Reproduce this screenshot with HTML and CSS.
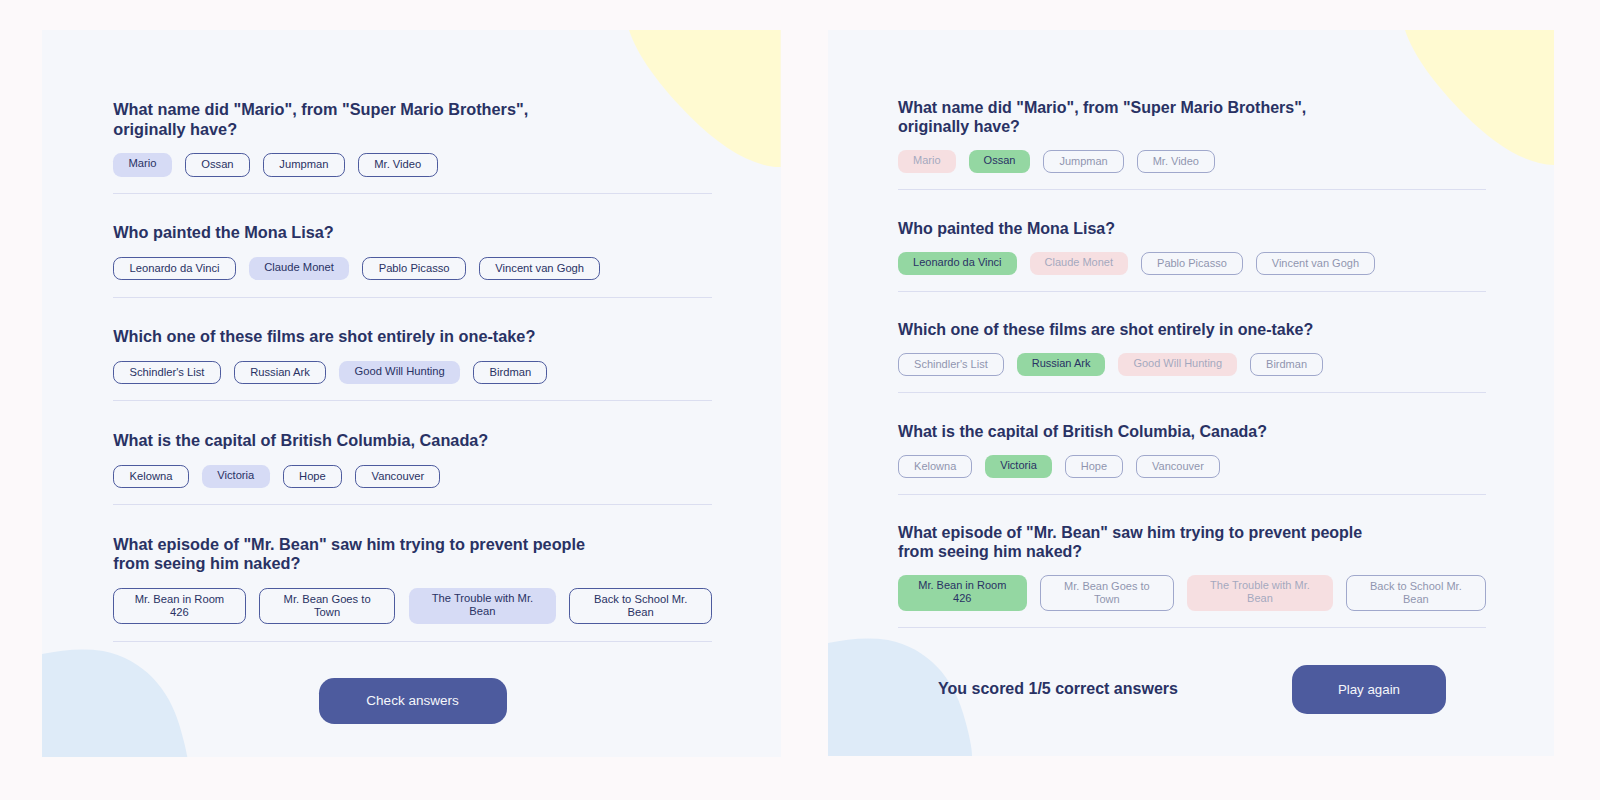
FILE: index.html
```html
<!DOCTYPE html>
<html lang="en">
<head>
<meta charset="utf-8">
<title>Quizzical</title>
<link rel="stylesheet" href="styles.css">
</head>
<body>
<main class="page">
  <section class="panel panel--original">
    <svg class="blob blob--yellow" width="149" height="135" viewBox="0 0 149 135"><path d="M0 0 C8 25 30 55 60 85 C90 115 120 134 149 135 V0 Z"/></svg>
    <svg class="blob blob--blue" width="145" height="118" viewBox="0 0 145 118"><path d="M0 5 C20 1 40 -1 60 2 C100 10 125 40 135 75 C141 95 144 110 144 118 H0 Z"/></svg>
    <div class="quiz">
      <div class="question">
        <h2 class="question-title">What name did "Mario", from "Super Mario Brothers", originally have?</h2>
        <div class="answers">
          <button class="answer answer--selected">Mario</button>
          <button class="answer">Ossan</button>
          <button class="answer">Jumpman</button>
          <button class="answer">Mr. Video</button>
        </div>
      </div>
      <div class="question">
        <h2 class="question-title">Who painted the Mona Lisa?</h2>
        <div class="answers">
          <button class="answer">Leonardo da Vinci</button>
          <button class="answer answer--selected">Claude Monet</button>
          <button class="answer">Pablo Picasso</button>
          <button class="answer">Vincent van Gogh</button>
        </div>
      </div>
      <div class="question">
        <h2 class="question-title">Which one of these films are shot entirely in one-take?</h2>
        <div class="answers">
          <button class="answer">Schindler's List</button>
          <button class="answer">Russian Ark</button>
          <button class="answer answer--selected">Good Will Hunting</button>
          <button class="answer">Birdman</button>
        </div>
      </div>
      <div class="question">
        <h2 class="question-title">What is the capital of British Columbia, Canada?</h2>
        <div class="answers">
          <button class="answer">Kelowna</button>
          <button class="answer answer--selected">Victoria</button>
          <button class="answer">Hope</button>
          <button class="answer">Vancouver</button>
        </div>
      </div>
      <div class="question">
        <h2 class="question-title">What episode of "Mr. Bean" saw him trying to prevent people from seeing him naked?</h2>
        <div class="answers">
          <button class="answer">Mr. Bean in Room 426</button>
          <button class="answer">Mr. Bean Goes to Town</button>
          <button class="answer answer--selected">The Trouble with Mr. Bean</button>
          <button class="answer">Back to School Mr. Bean</button>
        </div>
      </div>
      <div class="footer footer--check">
        <button class="btn btn--check">Check answers</button>
      </div>
    </div>
  </section>

  <section class="panel panel--live">
    <svg class="blob blob--yellow" width="149" height="135" viewBox="0 0 149 135"><path d="M0 0 C8 25 30 55 60 85 C90 115 120 134 149 135 V0 Z"/></svg>
    <svg class="blob blob--blue" width="145" height="118" viewBox="0 0 145 118"><path d="M0 5 C20 1 40 -1 60 2 C100 10 125 40 135 75 C141 95 144 110 144 118 H0 Z"/></svg>
    <div class="quiz">
      <div class="question">
        <h2 class="question-title">What name did "Mario", from "Super Mario Brothers", originally have?</h2>
        <div class="answers">
          <button class="answer answer--wrong">Mario</button>
          <button class="answer answer--correct">Ossan</button>
          <button class="answer answer--faded">Jumpman</button>
          <button class="answer answer--faded">Mr. Video</button>
        </div>
      </div>
      <div class="question">
        <h2 class="question-title">Who painted the Mona Lisa?</h2>
        <div class="answers">
          <button class="answer answer--correct">Leonardo da Vinci</button>
          <button class="answer answer--wrong">Claude Monet</button>
          <button class="answer answer--faded">Pablo Picasso</button>
          <button class="answer answer--faded">Vincent van Gogh</button>
        </div>
      </div>
      <div class="question">
        <h2 class="question-title">Which one of these films are shot entirely in one-take?</h2>
        <div class="answers">
          <button class="answer answer--faded">Schindler's List</button>
          <button class="answer answer--correct">Russian Ark</button>
          <button class="answer answer--wrong">Good Will Hunting</button>
          <button class="answer answer--faded">Birdman</button>
        </div>
      </div>
      <div class="question">
        <h2 class="question-title">What is the capital of British Columbia, Canada?</h2>
        <div class="answers">
          <button class="answer answer--faded">Kelowna</button>
          <button class="answer answer--correct">Victoria</button>
          <button class="answer answer--faded">Hope</button>
          <button class="answer answer--faded">Vancouver</button>
        </div>
      </div>
      <div class="question">
        <h2 class="question-title">What episode of "Mr. Bean" saw him trying to prevent people from seeing him naked?</h2>
        <div class="answers">
          <button class="answer answer--correct">Mr. Bean in Room 426</button>
          <button class="answer answer--faded">Mr. Bean Goes to Town</button>
          <button class="answer answer--wrong">The Trouble with Mr. Bean</button>
          <button class="answer answer--faded">Back to School Mr. Bean</button>
        </div>
      </div>
      <div class="footer footer--result">
        <p class="score">You scored 1/5 correct answers</p>
        <button class="btn btn--again">Play again</button>
      </div>
    </div>
  </section>
</main>
</body>
</html>
```

FILE: styles.css
```css
* {
  box-sizing: border-box;
}

html,
body {
  margin: 0;
  background: #fcf9fa;
}

body {
  font-family: "Liberation Sans", Arial, sans-serif;
  color: #293264;
}

.page {
  display: flex;
  align-items: flex-start;
  gap: 47px;
  padding: 30px 0 0 42px;
  height: 800px;
}

.panel {
  position: relative;
  overflow: hidden;
  flex: 0 0 auto;
  width: 726px;
  height: 726px;
  padding: 39.5px 68px 0 70px;
  background: #f5f7fb;
}

.panel--original {
  zoom: 1.018;
  height: 714px;
  padding-top: 40px;
}

.blob {
  position: absolute;
  display: block;
}

.blob--yellow {
  top: 0;
  right: 0;
  fill: #fffad1;
}

.blob--blue {
  left: 0;
  top: 608px;
  fill: #deebf8;
}

.quiz {
  position: relative;
  z-index: 1;
}

.question {
  padding: 28.5px 0 16px;
  border-bottom: 1px solid #dbdef0;
}

.panel--original .question {
  padding-top: 29px;
}

.question-title {
  margin: 0 0 14px;
  max-width: 475px;
  font-size: 16px;
  line-height: 19px;
  font-weight: 700;
  color: #293264;
}

.answers {
  display: flex;
  gap: 13px;
}

.answer {
  flex: 0 1 auto;
  padding: 4px 15px;
  border: 1px solid #4d5b9e;
  border-radius: 8px;
  background: transparent;
  font-family: "Liberation Sans", Arial, sans-serif;
  font-size: 11px;
  line-height: 13px;
  color: #293264;
  text-align: center;
}

.answer--selected,
.answer--correct,
.answer--wrong {
  border: 0;
  padding: 4px 15px 6px;
}

.answer--selected {
  background: #d6dbf5;
}

.answer--correct {
  background: #94d7a2;
}

.answer--wrong {
  background: #f8bcbc;
  opacity: 0.4;
}

.answer--faded {
  opacity: 0.5;
}

.footer {
  display: flex;
  align-items: center;
  justify-content: center;
}

.footer--check {
  margin-top: 36px;
}

.footer--result {
  margin-top: 36.5px;
  gap: 114px;
}

.score {
  margin: 0;
  font-size: 16px;
  font-weight: 700;
  color: #293264;
}

.btn {
  border: none;
  border-radius: 15px;
  background: #4d5b9e;
  color: #f5f7fb;
  font-family: "Liberation Sans", Arial, sans-serif;
  font-size: 13.3px;
  line-height: 15px;
}

.btn--check {
  padding: 15px 47px;
}

.btn--again {
  padding: 17px 46px;
}
```
